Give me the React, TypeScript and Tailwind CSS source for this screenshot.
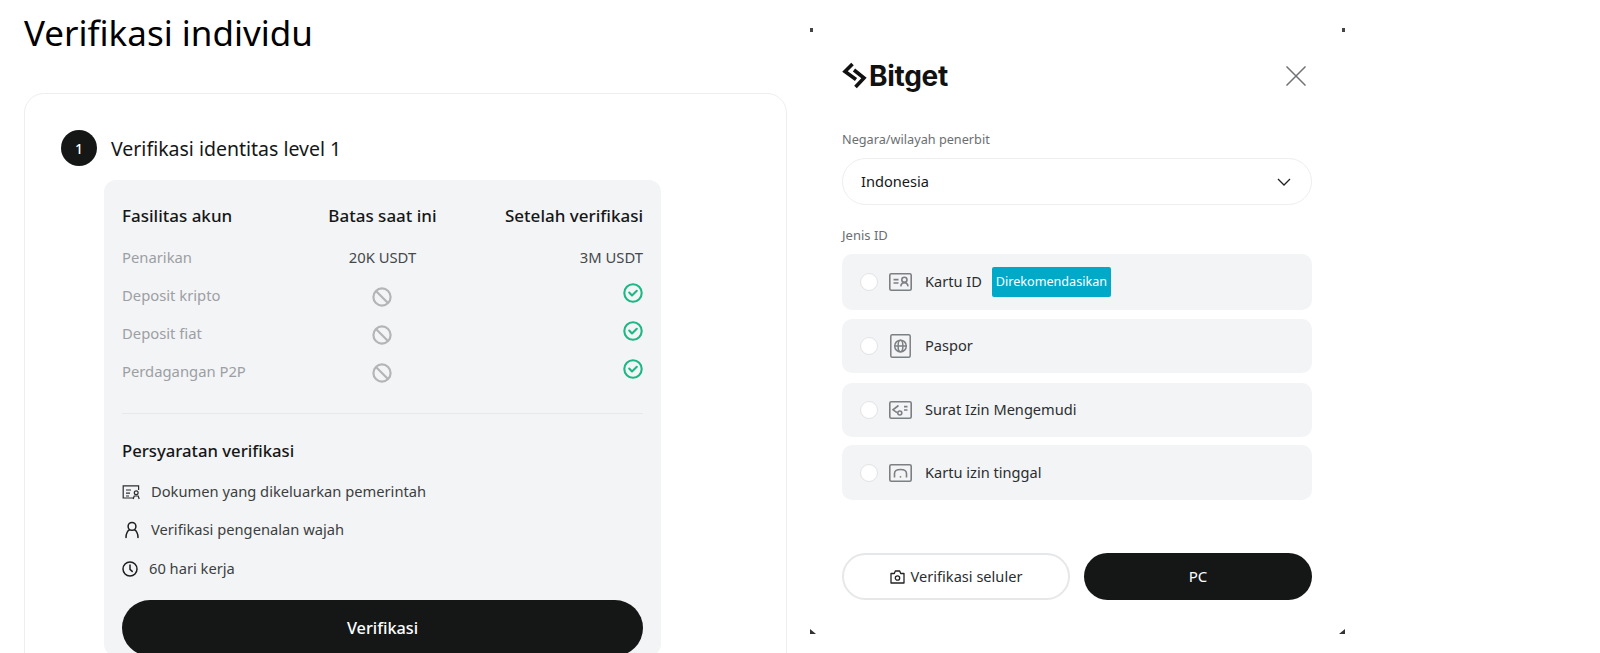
const font = "font-['Noto_Sans',sans-serif]";

const BanIcon = () => (
  <svg width="20" height="20" viewBox="0 0 20 20" fill="none" stroke="#b4b5b7" strokeWidth="2.2">
    <circle cx="10" cy="10" r="8.6" />
    <path d="M4 4l12 12" />
  </svg>
);

const CheckIcon = () => (
  <svg width="20" height="20" viewBox="0 0 20 20" fill="none" stroke="#1db784" strokeWidth="2.1">
    <circle cx="10" cy="10" r="8.7" />
    <path d="M6.200 9.600l2.800 2.800 4.800-4.600" strokeLinecap="round" strokeLinejoin="round" />
  </svg>
);

const rows = [
  { name: "Penarikan", now: "20K USDT", after: "3M USDT" },
  { name: "Deposit kripto" },
  { name: "Deposit fiat" },
  { name: "Perdagangan P2P" },
];

const DocIcon = () => (
  <svg width="19" height="16" viewBox="0 0 19 16" fill="none" stroke="#2b2e30" strokeWidth="1.200">
    <path d="M12 14H1.200V1.800h15.400V6" />
    <path d="M4 6h5M4 9.200h4M4 12h3" />
    <circle cx="14.200" cy="8.800" r="1.900" />
    <path d="M11.200 15l1-3h4l1 3" />
  </svg>
);

const PersonIcon = () => (
  <svg width="16" height="18" viewBox="0 0 16 18" fill="none" stroke="#1c1e1f" strokeWidth="1.500">
    <circle cx="8" cy="5.400" r="3.900" />
    <path d="M2 16.400c0-3.500 1.600-7 3.600-7.600M14 16.400c0-3.500-1.600-7-3.600-7.600" strokeLinecap="round" />
  </svg>
);

const ClockIcon = () => (
  <svg width="16" height="16" viewBox="0 0 16 16" fill="none" stroke="#1c1e1f" strokeWidth="1.500">
    <circle cx="8" cy="8" r="7" />
    <path d="M8 4v4.400l2.200 2" strokeLinecap="round" />
  </svg>
);

const KartuIcon = () => (
  <svg width="23" height="18" viewBox="0 0 23 18" fill="none" stroke="#7d8083" strokeWidth="1.600">
    <rect x="0.800" y="0.800" width="21.400" height="16.400" rx="1.500" />
    <path d="M4.500 6.600h5M4.500 10h5" />
    <circle cx="15.400" cy="6.800" r="2.600" />
    <path d="M11.800 13.400c.3-2.600 1.400-3.800 3.600-3.800s3.300 1.200 3.600 3.800" />
  </svg>
);

const PasporIcon = () => (
  <svg width="21" height="24" viewBox="0 0 21 24" fill="none" stroke="#7d8083" strokeWidth="1.500">
    <rect x="0.800" y="0.800" width="19.400" height="22.400" rx="1.500" />
    <circle cx="10.500" cy="12" r="5.800" />
    <ellipse cx="10.500" cy="12" rx="2.400" ry="5.800" />
    <path d="M4.700 12h11.600" />
  </svg>
);

const SimIcon = () => (
  <svg width="23" height="18" viewBox="0 0 23 18" fill="none" stroke="#7d8083" strokeWidth="1.600">
    <rect x="0.800" y="0.800" width="21.400" height="16.400" rx="1.500" />
    <path d="M9.500 4.500L4 8.800l4 2.800" />
    <circle cx="10.800" cy="12" r="2" />
    <path d="M15 5.600h3.500M15 9h3.500" />
  </svg>
);

const TinggalIcon = () => (
  <svg width="23" height="18" viewBox="0 0 23 18" fill="none" stroke="#7d8083" strokeWidth="1.600">
    <rect x="0.800" y="0.800" width="21.400" height="16.400" rx="1.500" />
    <path d="M5.500 13.500V9.500c0-2.500 2.500-4 6-4s6 1.500 6 4v4" />
    <circle cx="11.500" cy="12.800" r="0.900" fill="#7d8083" stroke="none" />
  </svg>
);

const idTypes = [
  { label: "Kartu ID", Icon: KartuIcon, badge: true, rowClass: "h-[56px] mb-[9px]" },
  { label: "Paspor", Icon: PasporIcon, rowClass: "h-[54px] mb-[10px]" },
  { label: "Surat Izin Mengemudi", Icon: SimIcon, rowClass: "h-[54px] mb-[8px]" },
  { label: "Kartu izin tinggal", Icon: TinggalIcon, rowClass: "h-[55px]" },
];

export default function App() {
  return (
    <div className={`${font} flex h-[653px] w-[1600px] overflow-hidden bg-white text-[#151717]`}>
      <div className="ml-6 w-[763px] shrink-0">
        <h1 className="mt-[10px] text-[35px] leading-[46px] text-black">Verifikasi individu</h1>
        <div className="mt-[37px] h-[700px] rounded-[20px] border border-[#eeeeef] pl-9 pt-9">
          <div className="flex items-center gap-[14px]">
            <div className="flex size-9 items-center justify-center rounded-full bg-[#151717] text-[14px] font-medium text-white">1</div>
            <span className="pt-[1px] text-[19.5px] leading-[35px]">Verifikasi identitas level 1</span>
          </div>
          <div className="ml-[43px] mt-[14px] w-[557px] rounded-xl bg-[#f3f4f6] px-[18px] pt-[23px]">
            <div className="grid grid-cols-3 text-[17px] font-medium leading-[26px]">
              <span>Fasilitas akun</span>
              <span className="text-center">Batas saat ini</span>
              <span className="text-right">Setelah verifikasi</span>
            </div>
            <div className="mt-[9px] border-b border-[#e7e8ea] pb-[23px]">
              {rows.map((row) => (
                <div key={row.name} className="grid h-[38px] grid-cols-3 items-center text-[14.8px] text-[#9c9fa3]">
                  <span>{row.name}</span>
                  <span className="flex justify-center text-[#45484a]">
                    {row.now ?? <span className="mt-[4px]"><BanIcon /></span>}
                  </span>
                  <span className="flex justify-end text-[#45484a]">
                    {row.after ?? <span className="-mb-[1px] -mt-[5px]"><CheckIcon /></span>}
                  </span>
                </div>
              ))}
            </div>
            <p className="mt-[24px] text-[16.7px] font-medium leading-[26px]">Persyaratan verifikasi</p>
            <div className="mt-[15px] flex flex-col gap-[13px] text-[14.7px] leading-[25px] text-[#3c3f41]">
              <div className="flex items-center gap-[10px]"><DocIcon />Dokumen yang dikeluarkan pemerintah</div>
              <div className="flex items-center gap-[11px] pl-[2px]"><PersonIcon />Verifikasi pengenalan wajah</div>
              <div className="mt-[1px] flex items-center gap-[11px]"><ClockIcon />60 hari kerja</div>
            </div>
            <button className="mt-[19px] h-14 w-full rounded-full bg-[#151717] text-[16.3px] font-medium text-white">Verifikasi</button>
          </div>
        </div>
      </div>

      <div className="relative ml-[23px] mt-[28px] h-[606px] w-[535px] shrink-0 pl-8 pr-[33px]">
        <span className="absolute left-0 top-0 h-[4px] w-[3px] bg-[#444]" />
        <span className="absolute right-0 top-0 h-[4px] w-[3px] bg-[#444]" />
        <span className="absolute bottom-0 left-0 h-0 w-0 border-b-[5px] border-r-[6px] border-b-[#333] border-r-transparent" />
        <span className="absolute bottom-0 right-0 h-0 w-0 border-b-[5px] border-l-[6px] border-b-[#333] border-l-transparent" />

        <div className="mt-[32px] flex h-[32px] items-center justify-between">
          <div className="flex items-center gap-[2px]">
            <svg width="25" height="28" viewBox="0 0 25 28" fill="none" stroke="#111" strokeWidth="3.600">
              <path d="M10.500 2L3 9.500l11 8" />
              <path d="M12 8l10 8-8.500 9" />
            </svg>
            <span className="font-['Inter',sans-serif] text-[28px] font-bold leading-none tracking-[-0.3px] text-[#111]">Bitget</span>
          </div>
          <svg className="mr-[6px]" width="20" height="20" viewBox="0 0 20 20" stroke="#6f7274" strokeWidth="1.500">
            <path d="M.5.500l19 19M19.500.500l-19 19" />
          </svg>
        </div>

        <p className="mt-[37px] text-[12.7px] leading-[20px] text-[#6b6e71]">Negara/wilayah penerbit</p>
        <div className="mt-[9px] flex h-[47px] items-center justify-between rounded-full border border-[#eeeeef] pl-[18px] pr-[20px] text-[14.6px]">
          Indonesia
          <svg width="14" height="8" viewBox="0 0 14 8" fill="none" stroke="#222" strokeWidth="1.300">
            <path d="M1 1l6 6 6-6" />
          </svg>
        </div>

        <p className="mt-[20px] text-[13px] leading-[20px] text-[#6b6e71]">Jenis ID</p>
        <div className="mt-[9px]">
          {idTypes.map(({ label, Icon, badge, rowClass }) => (
            <div key={label} className={`flex items-center rounded-[10px] bg-[#f3f4f6] pl-[18px] text-[14.6px] text-[#2b2e30] ${rowClass}`}>
              <span className="size-[18px] rounded-full border border-[#e2e3e5] bg-white" />
              <span className="ml-[6px] flex w-[32px] justify-center"><Icon /></span>
              <span className="ml-[9px]">{label}</span>
              {badge && <span className="ml-[10px] flex h-[30px] w-[119px] items-center justify-center rounded-[2px] bg-[#00a9c8] text-[12.6px] text-white">Direkomendasikan</span>}
            </div>
          ))}
        </div>

        <div className="mt-[53px] grid grid-cols-2 gap-[14px]">
          <button className="flex h-[47px] items-center justify-center gap-[6px] rounded-full border-2 border-[#e6e7e8] text-[14.6px] text-[#2b2e30]">
            <svg width="15" height="14" viewBox="0 0 15 14" fill="none" stroke="#222" strokeWidth="1.300">
              <path d="M1 3.500h3.300L5.300 1h4.400l1 2.500H14V13H1z" strokeLinejoin="round" />
              <circle cx="7.500" cy="8" r="2.200" />
            </svg>
            Verifikasi seluler
          </button>
          <button className="h-[47px] rounded-full bg-[#151717] text-[15px] text-white">PC</button>
        </div>
      </div>
    </div>
  );
}
